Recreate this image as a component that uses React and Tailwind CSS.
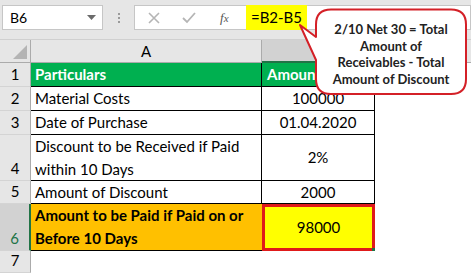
import React from 'react';

const sheetFont = { fontFamily: 'Lato, "Open Sans", sans-serif' };

function RowHead({ n, h, active }) {
  return (
    <div
      className={`w-[31px] shrink-0 flex items-end justify-center pb-[1px] border-b border-[#d4d4d4] text-[15px] ${
        active ? 'bg-[#d2d2d2] text-[#217346] border-r-2 border-r-[#217346]' : 'bg-[#e6e6e6] text-black border-r border-r-[#ababab]'
      } ${h}`}
    >
      {n}
    </div>
  );
}

function Row({ n, h, a, b, aClass = '', bClass = 'justify-center', active }) {
  return (
    <div className={`flex ${h}`}>
      <RowHead n={n} h={h} active={active} />
      <div className={`w-[231px] shrink-0 border-r border-b border-black px-[4px] flex items-center leading-[23px] text-[15px] ${aClass}`}>
        {a}
      </div>
      <div className={`w-[113px] shrink-0 border-r border-b border-black flex items-center text-[15px] ${bClass}`}>
        {b}
      </div>
      <div className="flex-1 bg-white" />
    </div>
  );
}

export default function App() {
  return (
    <div className="relative w-[471px] h-[273px] overflow-hidden bg-white text-black" style={sheetFont}>
      {/* formula bar */}
      <div className="h-[40px] bg-[#e6e6e6] flex items-start pt-[5px] pl-[2px] border-b border-[#d0d0d0]">
        <div className="w-[101px] h-[25px] bg-white border border-[#c6c6c6] flex items-center justify-between pl-[7px] pr-[6px] text-[14px]">
          <span>B6</span>
          <svg width="9" height="5" viewBox="0 0 9 5">
            <path d="M0 0 L9 0 L4.5 5 Z" fill="#6b6b6b" />
          </svg>
        </div>
        <div className="w-[31px] h-[25px] flex flex-col items-center justify-center gap-[2px]">
          <span className="w-[2px] h-[2px] bg-[#9a9a9a]" />
          <span className="w-[2px] h-[2px] bg-[#9a9a9a]" />
          <span className="w-[2px] h-[2px] bg-[#9a9a9a]" />
        </div>
        <div className="w-[112px] h-[25px] bg-white border border-[#c6c6c6] border-r-0 flex items-center pl-[13px]">
          <svg width="12" height="12" viewBox="0 0 12 12">
            <path d="M1 1 L11 11 M11 1 L1 11" stroke="#b5b5b5" strokeWidth="1.6" />
          </svg>
          <svg width="14" height="12" viewBox="0 0 14 12" className="ml-[22px]">
            <path d="M1 6 L5 10 L13 1" stroke="#b5b5b5" strokeWidth="1.8" fill="none" />
          </svg>
          <span className="ml-[24px] text-[13px] italic text-[#555]" style={{ fontFamily: '"Liberation Serif", serif' }}>
            f<span className="text-[11px]">x</span>
          </span>
        </div>
        <div className="w-[61px] h-[25px] bg-[#ffff00] flex items-center justify-center text-[15px]">=B2-B5</div>
        <div className="flex-1 h-[25px] bg-white border border-[#c6c6c6] border-l-0" />
      </div>

      {/* column headers */}
      <div className="flex h-[23px]">
        <div className="w-[31px] shrink-0 bg-[#e6e6e6] border-r border-b border-[#ababab] flex items-end justify-end p-[3px]">
          <svg width="14" height="14" viewBox="0 0 14 14">
            <path d="M14 0 L14 14 L0 14 Z" fill="#b4b4b4" />
          </svg>
        </div>
        <div className="w-[231px] shrink-0 bg-[#e6e6e6] border-r border-b border-[#ababab] flex items-center justify-center text-[15px]">
          A
        </div>
        <div className="w-[113px] shrink-0 bg-[#d2d2d2] border-r border-[#ababab] border-b-2 border-b-[#217346] flex items-center justify-center text-[15px] text-[#217346]">
          B
        </div>
        <div className="flex-1 bg-[#e6e6e6] border-b border-[#ababab]" />
      </div>

      <Row
        n="1"
        h="h-[24px]"
        a="Particulars"
        b="Amount"
        aClass="bg-[#00b050] text-white font-bold"
        bClass="bg-[#00b050] text-white font-bold pl-[5px]"
      />
      <Row n="2" h="h-[24px]" a="Material Costs" b="100000" />
      <Row n="3" h="h-[24px]" a="Date of Purchase" b="01.04.2020" />
      <Row n="4" h="h-[46px]" a="Discount to be Received if Paid within 10 Days" b="2%" />
      <Row n="5" h="h-[23px]" a="Amount of Discount" b="2000" />
      <div className="flex h-[47px]">
        <RowHead n="6" h="h-[47px]" active />
        <div className="w-[231px] shrink-0 border-b border-black bg-[#ffc000] px-[4px] flex items-center leading-[23px] text-[15px] font-bold">
          Amount to be Paid if Paid on or Before 10 Days
        </div>
        <div className="relative w-[113px] shrink-0 bg-[#ffff00] border-[3px] border-[#e01a1a] flex items-center justify-center text-[15px]">
          98000
          <span className="absolute right-[-3px] bottom-[-3px] w-[3px] h-[3px] bg-[#217346]" />
        </div>
        <div className="flex-1 bg-white" />
      </div>
      <div className="flex h-[22px]">
        <RowHead n="7" h="h-[22px]" />
        <div className="flex-1 bg-white" />
      </div>

      {/* callout */}
      <div className="absolute left-[298px] top-[8px] w-[171px] h-[88px]">
        <svg width="171" height="88" viewBox="0 0 171 88" className="absolute inset-0">
          <path
            d="M33 1.5 H153 Q168 1.5 168 16.5 V71 Q168 86 153 86 H33 Q18 86 18 71 V52 L2 17 L18 29 V16.5 Q18 1.5 33 1.5 Z"
            fill="white"
            stroke="#d42027"
            strokeWidth="2"
            strokeLinejoin="round"
          />
        </svg>
        <div className="absolute left-[18px] right-[3px] top-[13px] text-center text-[13px] leading-[16.5px] font-bold text-[#222]">
          2/10 Net 30 = Total
          <br />
          Amount of
          <br />
          Receivables - Total
          <br />
          Amount of Discount
        </div>
      </div>
    </div>
  );
}
